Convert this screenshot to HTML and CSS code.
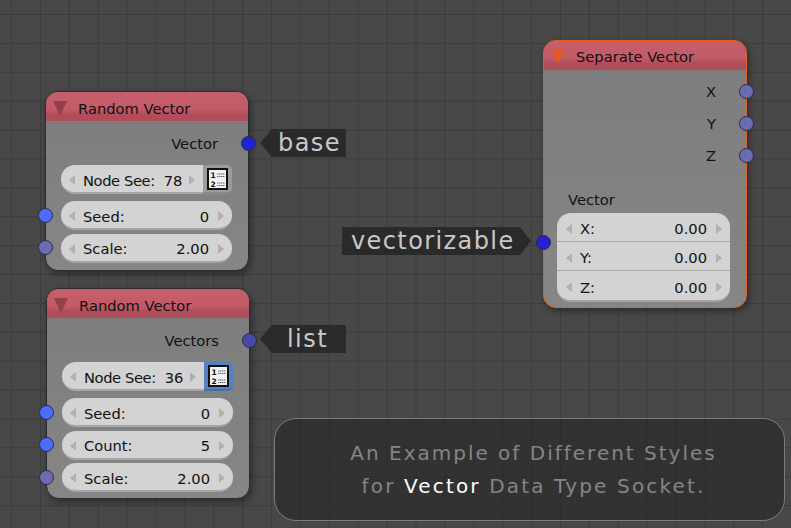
FILE: index.html
```html
<!DOCTYPE html>
<html>
<head>
    <title>Vector Data Type Socket</title>
    <link rel="stylesheet" href="styles.css">
</head>
<body>
    <div class="canvas">
        <!-- Random Vector, base -->
        <div class="node node-base">
            <div class="node-header">
                <span class="collapse"></span>
                <span>Random Vector</span>
            </div>
            <div class="node-body">
                <div class="output-row">
                    Vector
                    <span class="socket socket-out socket-dark"></span>
                </div>
                <div class="seed-row">
                    <div class="field field-left">
                        <span class="arrow-left"></span>
                        <span class="field-text field-seed"><span class="seed-name">Node See:</span><span>78</span></span>
                        <span class="arrow-right"></span>
                    </div>
                    <div class="icon-btn">
                        <svg class="list-icon" viewBox="0 0 21 22"><rect x="1" y="1" width="19" height="20" fill="#f2f2f2" stroke="#111" stroke-width="2"/><text x="3.4" y="10" class="icon-num">1</text><text x="3.4" y="19" class="icon-num">2</text><path d="M10 6h8M10 8.5h8M10 15h8M10 17.5h8" stroke="#666" stroke-width="1" stroke-dasharray="1.5 .5"/></svg>
                    </div>
                </div>
                <div class="field">
                    <span class="socket socket-in socket-bright"></span>
                    <span class="arrow-left"></span>
                    <span class="field-text"><span>Seed:</span><span>0</span></span>
                    <span class="arrow-right"></span>
                </div>
                <div class="field">
                    <span class="socket socket-in socket-grey"></span>
                    <span class="arrow-left"></span>
                    <span class="field-text"><span>Scale:</span><span>2.00</span></span>
                    <span class="arrow-right"></span>
                </div>
            </div>
        </div>

        <!-- Random Vector, list -->
        <div class="node node-list">
            <div class="node-header">
                <span class="collapse"></span>
                <span>Random Vector</span>
            </div>
            <div class="node-body">
                <div class="output-row">
                    Vectors
                    <span class="socket socket-out socket-list"></span>
                </div>
                <div class="seed-row">
                    <div class="field field-left">
                        <span class="arrow-left"></span>
                        <span class="field-text field-seed"><span class="seed-name">Node See:</span><span>36</span></span>
                        <span class="arrow-right"></span>
                    </div>
                    <div class="icon-btn icon-btn-active">
                        <svg class="list-icon" viewBox="0 0 21 22"><rect x="1" y="1" width="19" height="20" fill="#f2f2f2" stroke="#111" stroke-width="2"/><text x="3.4" y="10" class="icon-num">1</text><text x="3.4" y="19" class="icon-num">2</text><path d="M10 6h8M10 8.5h8M10 15h8M10 17.5h8" stroke="#666" stroke-width="1" stroke-dasharray="1.5 .5"/></svg>
                    </div>
                </div>
                <div class="field">
                    <span class="socket socket-in socket-bright"></span>
                    <span class="arrow-left"></span>
                    <span class="field-text"><span>Seed:</span><span>0</span></span>
                    <span class="arrow-right"></span>
                </div>
                <div class="field">
                    <span class="socket socket-in socket-bright"></span>
                    <span class="arrow-left"></span>
                    <span class="field-text"><span>Count:</span><span>5</span></span>
                    <span class="arrow-right"></span>
                </div>
                <div class="field">
                    <span class="socket socket-in socket-grey"></span>
                    <span class="arrow-left"></span>
                    <span class="field-text"><span>Scale:</span><span>2.00</span></span>
                    <span class="arrow-right"></span>
                </div>
            </div>
        </div>

        <!-- Separate Vector (selected) -->
        <div class="node node-separate">
            <div class="node-header">
                <span class="collapse collapse-active"></span>
                <span>Separate Vector</span>
            </div>
            <div class="node-body separate-body">
                <div class="axis-row">X<span class="socket socket-out socket-grey"></span></div>
                <div class="axis-row">Y<span class="socket socket-out socket-grey"></span></div>
                <div class="axis-row">Z<span class="socket socket-out socket-grey"></span></div>
                <div class="vector-label">Vector</div>
                <div class="vector-stack">
                    <span class="socket socket-in socket-stack socket-dark"></span>
                    <div class="stack-row">
                        <span class="arrow-left"></span>
                        <span class="field-text"><span>X:</span><span>0.00</span></span>
                        <span class="arrow-right"></span>
                    </div>
                    <div class="stack-row">
                        <span class="arrow-left"></span>
                        <span class="field-text"><span>Y:</span><span>0.00</span></span>
                        <span class="arrow-right"></span>
                    </div>
                    <div class="stack-row">
                        <span class="arrow-left"></span>
                        <span class="field-text"><span>Z:</span><span>0.00</span></span>
                        <span class="arrow-right"></span>
                    </div>
                </div>
            </div>
        </div>

        <div class="tag tag-left tag-base">base</div>
        <div class="tag tag-left tag-listed">list</div>
        <div class="tag tag-right tag-vectorizable">vectorizable</div>

        <div class="note">
            <div>An Example of Different Styles</div>
            <div class="note-second">for <span class="note-strong">Vector</span> Data Type Socket.</div>
        </div>
    </div>
</body>
</html>
```

FILE: styles.css
```css
body {
    margin: 0;
    padding: 0;
    font-family: "DejaVu Sans", sans-serif;
}

.canvas {
    position: relative;
    width: 791px;
    height: 528px;
    overflow: hidden;
    background-color: #484848;
    background-image:
        linear-gradient(to right, #3c3c3c 1px, transparent 1px),
        linear-gradient(to bottom, #3c3c3c 1px, transparent 1px);
    background-size: 28.9px 28.9px;
    background-position: 11px 14px;
}

/* nodes */
.node {
    position: absolute;
    box-sizing: border-box;
    width: 204px;
    border: 1px solid #2b2b2b;
    border-radius: 13px;
    background: linear-gradient(to bottom, #7c7c7c, #868686);
    box-shadow: 2px 3px 7px rgba(0, 0, 0, 0.4);
    color: #111;
    font-size: 14.7px;
}

.node-base {
    left: 45px;
    top: 91px;
    height: 180px;
}

.node-list {
    left: 46px;
    top: 288px;
    height: 211px;
}

.node-separate {
    left: 543px;
    top: 40px;
    height: 268px;
    border-color: #e0601e;
}

.node-header {
    display: flex;
    align-items: center;
    gap: 11px;
    box-sizing: border-box;
    height: 29px;
    padding: 3px 0 0 7px;
    border-radius: 12px 12px 0 0;
    background: linear-gradient(to bottom, #c65e6c 0, #c25a68 60%, #b14c5a 78%, #b14c5a 100%);
}

.node-separate .node-header {
    padding-top: 2px;
}

.collapse {
    width: 0;
    height: 0;
    border-left: 7px solid transparent;
    border-right: 7px solid transparent;
    border-top: 15px solid #953f4b;
}

.collapse-active {
    border-top-color: #e2591f;
}

.node-body {
    display: flex;
    flex-direction: column;
    gap: 3.5px;
    padding: 0 16px 0 15px;
}

.output-row {
    position: relative;
    display: flex;
    justify-content: flex-end;
    align-items: center;
    box-sizing: border-box;
    height: 40.5px;
    padding: 4.5px 14px 0 0;
}

.output-row .socket {
    top: 22px;
}

/* sockets */
.socket {
    position: absolute;
    top: 50%;
    box-sizing: border-box;
    width: 15px;
    height: 15px;
    margin-top: -7px;
    border: 1px solid #2c2c3c;
    border-radius: 50%;
}

.socket-out {
    right: -24px;
}

.socket-in {
    left: -23px;
}

.socket-bright {
    background: #4d6bff;
}

.socket-dark {
    background: #2222d2;
}

.socket-list {
    background: #4848aa;
}

.socket-grey {
    background: #6c6cb4;
}

.socket-stack {
    top: 22px;
    left: -21px;
    margin-top: 0;
}

/* number fields */
.field {
    position: relative;
    display: flex;
    align-items: center;
    box-sizing: border-box;
    height: 29px;
    padding: 3px 8px 0;
    border-radius: 14px;
    border-bottom: 2px solid #a6a6a6;
    background: #d3d3d3;
}

.field-text {
    display: flex;
    flex: 1;
    justify-content: space-between;
    margin: 0 9px 0 8px;
    white-space: nowrap;
}

.field-seed {
    justify-content: flex-start;
    gap: 9px;
    margin-right: 7px;
}

.seed-name {
    letter-spacing: -0.4px;
}

.arrow-left,
.arrow-right {
    width: 0;
    height: 0;
    border-top: 5px solid transparent;
    border-bottom: 5px solid transparent;
}

.arrow-left {
    border-right: 6px solid #b0b0b0;
}

.arrow-right {
    border-left: 6px solid #b0b0b0;
}

.seed-row {
    display: flex;
    height: 29px;
    margin-bottom: 3.5px;
}

.field-left {
    flex: 1;
    border-radius: 14px 0 0 14px;
}

.icon-btn {
    display: flex;
    justify-content: center;
    align-items: center;
    box-sizing: border-box;
    width: 29px;
    padding-right: 1px;
    border-radius: 0 5px 5px 0;
    border-bottom: 2px solid #8a8a8a;
    background: #9b9b9b;
}

.icon-btn-active {
    border-bottom-color: #4a6da6;
    background: #5680c2;
}

.list-icon {
    display: block;
    width: 21px;
    height: 22px;
}

.icon-num {
    font-family: "DejaVu Sans", sans-serif;
    font-size: 7.5px;
    font-weight: bold;
    fill: #111;
}

/* separate vector node */
.separate-body {
    gap: 0;
    padding-top: 7px;
}

.axis-row {
    position: relative;
    height: 32px;
    padding-right: 14px;
    line-height: 30px;
    text-align: right;
}

.axis-row .socket {
    margin-top: -9px;
}

.vector-label {
    height: 28px;
    margin-top: 12px;
    padding-left: 9px;
    line-height: 30px;
}

.vector-stack {
    position: relative;
    width: 173px;
    margin-left: -2px;
    border-radius: 14px;
    border-bottom: 2px solid #a6a6a6;
    background: #d3d3d3;
}

.stack-row {
    display: flex;
    align-items: center;
    box-sizing: border-box;
    height: 29px;
    padding: 3px 8px 0 9px;
    border-bottom: 1px solid #a8a8a8;
}

.stack-row:last-child {
    border-bottom: none;
}

/* floating tags */
.tag {
    position: absolute;
    box-sizing: border-box;
    height: 28px;
    line-height: 29px;
    background: rgba(38, 38, 38, 0.85);
    color: #c8c8c8;
    font-size: 24px;
    letter-spacing: 1.45px;
    white-space: nowrap;
}

.tag-left {
    clip-path: polygon(0 50%, 12px 0, 100% 0, 100% 100%, 12px 100%);
}

.tag-right {
    clip-path: polygon(0 0, calc(100% - 11px) 0, 100% 50%, calc(100% - 11px) 100%, 0 100%);
}

.tag-base {
    left: 260px;
    top: 129px;
    width: 86px;
    padding-left: 18px;
}

.tag-listed {
    left: 260px;
    top: 325px;
    width: 86px;
    padding-left: 27px;
}

.tag-vectorizable {
    left: 342px;
    top: 227px;
    width: 189px;
    padding-left: 9px;
    letter-spacing: 1.4px;
}

/* caption box */
.note {
    position: absolute;
    left: 274px;
    top: 418px;
    box-sizing: border-box;
    width: 511px;
    height: 103px;
    padding: 18px 0 0 8px;
    border: 1px solid #7c7c7c;
    border-radius: 22px;
    background: rgba(32, 32, 32, 0.55);
    color: #858585;
    font-size: 20px;
    line-height: 33px;
    letter-spacing: 2px;
    text-align: center;
}

.note-second {
    letter-spacing: 2.15px;
}

.note-strong {
    color: #fff;
}
```
